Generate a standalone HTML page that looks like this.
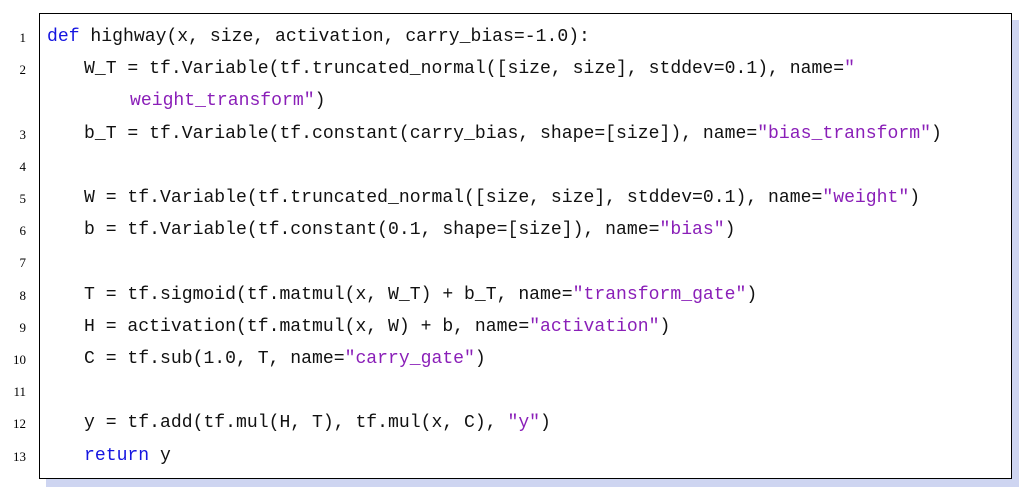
<!DOCTYPE html>
<html><head><style>
body{margin:0;background:#fff;width:1030px;height:494px;position:relative;overflow:hidden}
.sh{position:absolute;background:#ced5f1}
.box{position:absolute;left:39px;top:13px;width:971px;height:464px;border:1.5px solid #000;background:#fff}
.ln{position:absolute;left:0;width:26px;text-align:right;font:13px "Liberation Serif",serif;color:#000}
.c{position:absolute;left:47px;font:18.1px "Liberation Mono",monospace;color:#111;white-space:pre}
.k{color:#1515e0}.s{color:#8a1fb8}
</style></head><body>
<div class="sh" style="left:1011px;top:20px;width:8px;height:467px"></div>
<div class="sh" style="left:46px;top:479px;width:973px;height:8px"></div>
<div class="box"></div>
<div class="ln" style="top:30px">1</div>
<div class="ln" style="top:62px">2</div>
<div class="ln" style="top:127px">3</div>
<div class="ln" style="top:159px">4</div>
<div class="ln" style="top:191px">5</div>
<div class="ln" style="top:223px">6</div>
<div class="ln" style="top:255px">7</div>
<div class="ln" style="top:288px">8</div>
<div class="ln" style="top:320px">9</div>
<div class="ln" style="top:352px">10</div>
<div class="ln" style="top:384px">11</div>
<div class="ln" style="top:416px">12</div>
<div class="ln" style="top:449px">13</div>
<div class="c" style="top:27px"><span class="k">def</span> highway(x, size, activation, carry_bias=-1.0):</div>
<div class="c" style="top:59px;left:84px">W_T = tf.Variable(tf.truncated_normal([size, size], stddev=0.1), name=<span class="s">"</span></div>
<div class="c" style="top:91px;left:130px"><span class="s">weight_transform"</span>)</div>
<div class="c" style="top:124px;left:84px">b_T = tf.Variable(tf.constant(carry_bias, shape=[size]), name=<span class="s">"bias_transform"</span>)</div>
<div class="c" style="top:188px;left:84px">W = tf.Variable(tf.truncated_normal([size, size], stddev=0.1), name=<span class="s">"weight"</span>)</div>
<div class="c" style="top:220px;left:84px">b = tf.Variable(tf.constant(0.1, shape=[size]), name=<span class="s">"bias"</span>)</div>
<div class="c" style="top:285px;left:84px">T = tf.sigmoid(tf.matmul(x, W_T) + b_T, name=<span class="s">"transform_gate"</span>)</div>
<div class="c" style="top:317px;left:84px">H = activation(tf.matmul(x, W) + b, name=<span class="s">"activation"</span>)</div>
<div class="c" style="top:349px;left:84px">C = tf.sub(1.0, T, name=<span class="s">"carry_gate"</span>)</div>
<div class="c" style="top:413px;left:84px">y = tf.add(tf.mul(H, T), tf.mul(x, C), <span class="s">"y"</span>)</div>
<div class="c" style="top:446px;left:84px"><span class="k">return</span> y</div>
</body></html>
